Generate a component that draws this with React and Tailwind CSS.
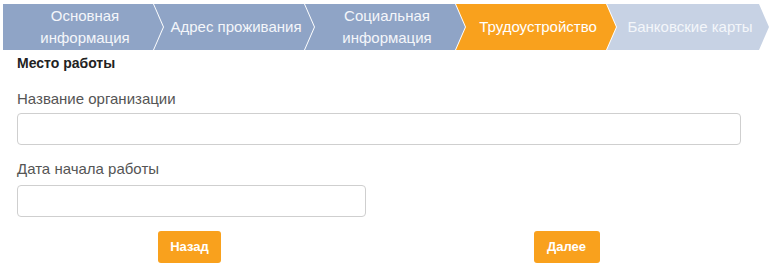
import React from 'react';

const steps = [
  { label: ['Основная', 'информация'], state: 'done' },
  { label: ['Адрес проживания'], state: 'done' },
  { label: ['Социальная', 'информация'], state: 'done' },
  { label: ['Трудоустройство'], state: 'active' },
  { label: ['Банковские карты'], state: 'todo' },
];

const colors = {
  done: 'bg-[#8fa4c6] text-[#f4f6fa]',
  active: 'bg-[#f9a11d] text-white',
  todo: 'bg-[#c7d2e4] text-[#f3f6fa]',
};

const Stepper = () => (
  <div className="flex h-[46px] mt-[4px] ml-[3px]">
    {steps.map((s, i) => (
      <div
        key={i}
        className={`${colors[s.state]} ${i === 0 ? 'w-[160px] pl-[4px]' : 'w-[160px] -ml-[9px] pl-[12px] pr-[8px]'} ${
          i === steps.length - 1 ? 'w-[162px]' : ''
        } h-full flex flex-col items-center justify-center text-[15px] leading-[22px] shrink-0`}
        style={{
          clipPath:
            i === 0
              ? 'polygon(0 0, calc(100% - 10px) 0, 100% 50%, calc(100% - 10px) 100%, 0 100%)'
              : 'polygon(0 0, calc(100% - 10px) 0, 100% 50%, calc(100% - 10px) 100%, 0 100%, 10px 50%)',
        }}
      >
        {s.label.map((l) => (
          <span key={l}>{l}</span>
        ))}
      </div>
    ))}
  </div>
);

const App = () => {
  return (
    <div className="w-[775px] h-[265px] bg-white font-['Liberation_Sans',Arial,sans-serif] overflow-hidden">
      <Stepper />
      <div className="w-[758px] px-[17px]">
        <h3 className="text-[14px] font-bold text-[#222] leading-[18px] mt-[4px]">Место работы</h3>

        <label className="block text-[15px] text-[#555] leading-[20px] mt-[17px]">Название организации</label>
        <input
          type="text"
          className="block w-full h-[32px] mt-[4px] border border-[#cfcfcf] rounded-[4px] bg-white outline-none"
        />

        <label className="block text-[15px] text-[#555] leading-[20px] mt-[14px]">Дата начала работы</label>
        <input
          type="text"
          className="block w-[349px] h-[32px] mt-[6px] border border-[#cfcfcf] rounded-[4px] bg-white outline-none"
        />
      </div>

      <div className="w-[758px] grid grid-cols-2 mt-[14px]">
        <div className="flex justify-center">
          <button className="w-[63px] h-[32px] rounded-[3px] bg-[#f9a11d] text-white text-[13px] font-bold">
            Назад
          </button>
        </div>
        <div className="flex justify-center pr-[4px]">
          <button className="w-[66px] h-[32px] rounded-[3px] bg-[#f9a11d] text-white text-[13px] font-bold">
            Далее
          </button>
        </div>
      </div>
    </div>
  );
};

export default App;
